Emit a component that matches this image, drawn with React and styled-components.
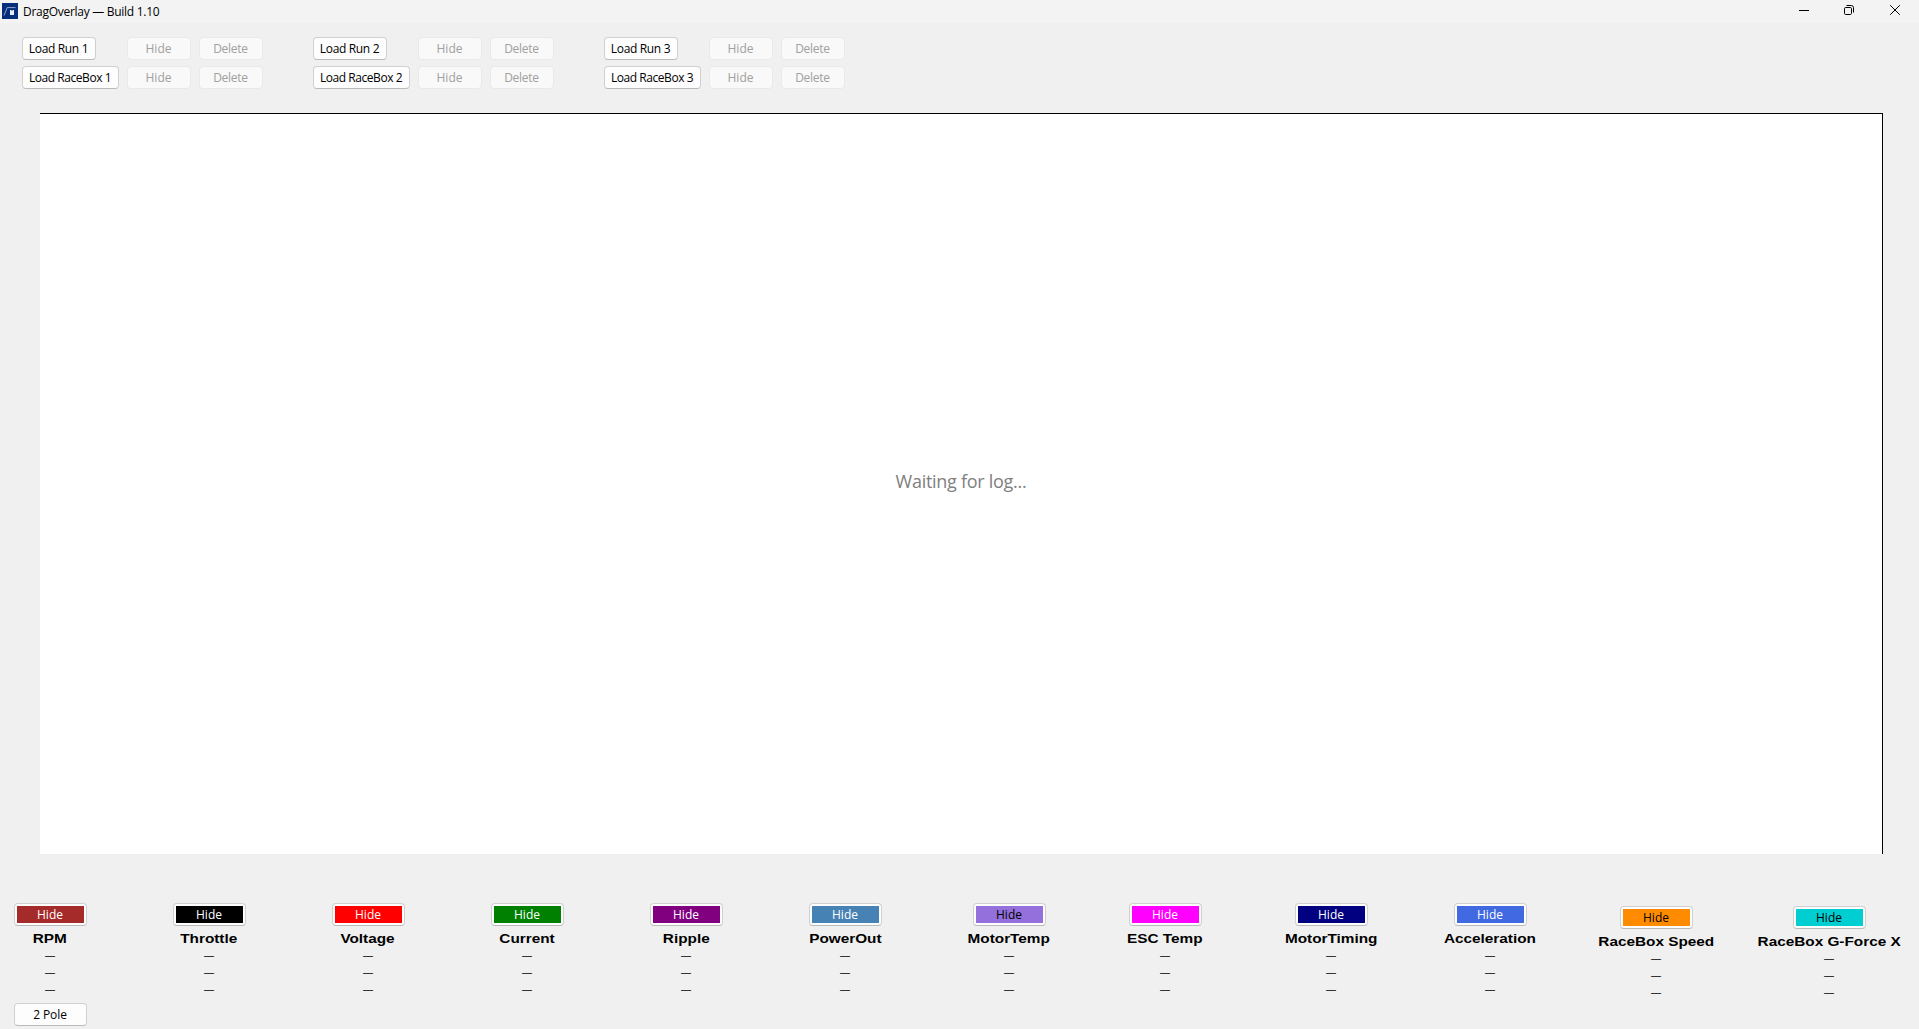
import React from 'react';
import styled, { createGlobalStyle } from 'styled-components';

const GlobalStyle = createGlobalStyle`
  * { box-sizing: border-box; }
  body {
    margin: 0;
    background: #f0f0f0;
    color: #000;
    font-family: "Open Sans", "Noto Sans", sans-serif;
    font-size: 12px;
    overflow: hidden;
  }
`;

const Window = styled.div`
  display: flex;
  flex-direction: column;
  width: 1919px;
  height: 1029px;
  background: #f0f0f0;
`;

const TitleBar = styled.header`
  display: flex;
  align-items: flex-start;
  height: 23px;
  padding-left: 2px;
  background: #f3f3f3;
`;

const AppIcon = styled.svg`
  width: 16px;
  height: 16px;
  margin-top: 3px;
`;

const Title = styled.h1`
  flex: 1;
  margin: 3px 0 0 5px;
  font-size: 12px;
  font-weight: 400;
  line-height: 18px;
  letter-spacing: -0.28px;
`;

const WindowControls = styled.div`
  display: flex;
  gap: 35px;
  padding: 5px 18px 0 0;
`;

const ControlIcon = styled.svg`
  width: 11px;
  height: 11px;
  fill: none;
  stroke: #000;
  stroke-width: 1;
`;

const Toolbar = styled.section`
  display: flex;
  gap: 50px;
  padding: 14px 0 0 22px;
  height: 90px;
`;

const RunSlot = styled.div`
  display: grid;
  grid-template-columns: 105px 72px 64px;
  grid-auto-rows: 23px;
  row-gap: 6px;
`;

const Button = styled.button`
  width: ${(p) => p.$width}px;
  height: 23px;
  padding: 0 1px 0 0;
  border: 1px solid #d0d0d0;
  border-bottom-color: #bababa;
  border-radius: 4px;
  background: #fdfdfd;
  color: #000;
  font: 12px/19px "Open Sans", "Noto Sans", sans-serif;
  letter-spacing: ${(p) => p.$tracking || 0}px;
  text-align: center;
  white-space: nowrap;

  &:disabled {
    border-color: #e9e9e9;
    background: #f9f9f9;
    color: #a0a0a0;
  }
`;

const Plot = styled.main`
  display: flex;
  align-items: center;
  justify-content: center;
  width: 1843px;
  height: 741px;
  margin-left: 40px;
  padding-bottom: 6px;
  border-top: 1px solid #000;
  border-right: 1px solid #000;
  background: #fff;
`;

const Placeholder = styled.p`
  margin: 0;
  color: #808080;
  font-size: 18px;
  line-height: 24px;
  letter-spacing: -0.28px;
`;

const ChannelBar = styled.footer`
  display: flex;
  align-items: flex-start;
  padding: 49px 0 0 14px;
`;

const Channel = styled.div`
  display: flex;
  flex-direction: column;
  align-items: center;
  flex: none;
  width: 73px;
  margin-left: ${(p) => p.$gap}px;
  padding-top: ${(p) => (p.$lowered ? 3 : 0)}px;
`;

const ChannelButton = styled(Button)`
  padding: 2px;
  margin-bottom: 3px;
`;

const Swatch = styled.span`
  display: block;
  height: 17px;
  padding-right: 1px;
  background: ${(p) => p.$color};
  color: ${(p) => (p.$dark ? '#000' : '#fff')};
  line-height: 17px;
`;

const ChannelName = styled.div`
  height: 19px;
  padding-right: 1px;
  font: bold 13.33px/19px "Liberation Sans", Arial, sans-serif;
  white-space: nowrap;
  transform: scaleX(1.15);
`;

const Reading = styled.div`
  height: 17px;
  padding-right: 1px;
  font: 10px/15px "Liberation Sans", Arial, sans-serif;
`;

const PoleButton = styled(Button)`
  margin-top: 4px;
`;

const runs = [1, 2, 3];

const channels = [
  { name: 'RPM', color: '#a52a2a', gap: 0, poles: '2 Pole' },
  { name: 'Throttle', color: '#000000', gap: 86 },
  { name: 'Voltage', color: '#ff0000', gap: 86 },
  { name: 'Current', color: '#008000', gap: 86 },
  { name: 'Ripple', color: '#800080', gap: 86 },
  { name: 'PowerOut', color: '#4682b4', gap: 86 },
  { name: 'MotorTemp', color: '#9370db', gap: 91, dark: true },
  { name: 'ESC Temp', color: '#ff00ff', gap: 83 },
  { name: 'MotorTiming', color: '#000080', gap: 93 },
  { name: 'Acceleration', color: '#4169e1', gap: 86 },
  { name: 'RaceBox Speed', color: '#ff8c00', gap: 93, dark: true, lowered: true },
  { name: 'RaceBox G-Force X', color: '#00ced1', gap: 100, dark: true, lowered: true },
];

function HideDelete() {
  return (
    <>
      <Button $width={64} disabled>Hide</Button>
      <Button $width={64} $tracking={-0.25} disabled>Delete</Button>
    </>
  );
}

export default function App() {
  return (
    <Window>
      <GlobalStyle />
      <TitleBar>
        <AppIcon viewBox="0 0 16 16">
          <rect width="16" height="16" fill="#052f7b" />
          <path d="M2 12.5 L5.2 4.6 H13.5" fill="none" stroke="#9fb2d6" strokeWidth="0.9" />
          <path d="M8 7 H12 V12 H8 Z" fill="#e8edf6" />
          <path d="M9 7.5 H11" stroke="#8ba0cb" strokeWidth="1" />
        </AppIcon>
        <Title>DragOverlay — Build 1.10</Title>
        <WindowControls>
          <ControlIcon viewBox="0 0 11 11"><path d="M1 5.5 H11" /></ControlIcon>
          <ControlIcon viewBox="0 0 11 11">
            <rect x="0.5" y="2.5" width="7" height="7" rx="1.2" />
            <path d="M2.5 0.5 H7.3 Q9.5 0.5 9.5 2.7 V7.5" />
          </ControlIcon>
          <ControlIcon viewBox="0 0 11 11"><path d="M0.2 0.2 L9.8 9.8 M9.8 0.2 L0.2 9.8" /></ControlIcon>
        </WindowControls>
      </TitleBar>

      <Toolbar>
        {runs.map((n) => (
          <RunSlot key={n}>
            <Button $width={74} $tracking={-0.34}>Load Run {n}</Button>
            <HideDelete />
            <Button $width={97} $tracking={-0.44}>Load RaceBox {n}</Button>
            <HideDelete />
          </RunSlot>
        ))}
      </Toolbar>

      <Plot>
        <Placeholder>Waiting for log...</Placeholder>
      </Plot>

      <ChannelBar>
        {channels.map((c) => (
          <Channel key={c.name} $gap={c.gap} $lowered={c.lowered}>
            <ChannelButton $width={73}>
              <Swatch $color={c.color} $dark={c.dark}>Hide</Swatch>
            </ChannelButton>
            <ChannelName>{c.name}</ChannelName>
            <Reading>—</Reading>
            <Reading>—</Reading>
            <Reading>—</Reading>
            {c.poles && <PoleButton $width={73} $tracking={-0.1}>{c.poles}</PoleButton>}
          </Channel>
        ))}
      </ChannelBar>
    </Window>
  );
}
